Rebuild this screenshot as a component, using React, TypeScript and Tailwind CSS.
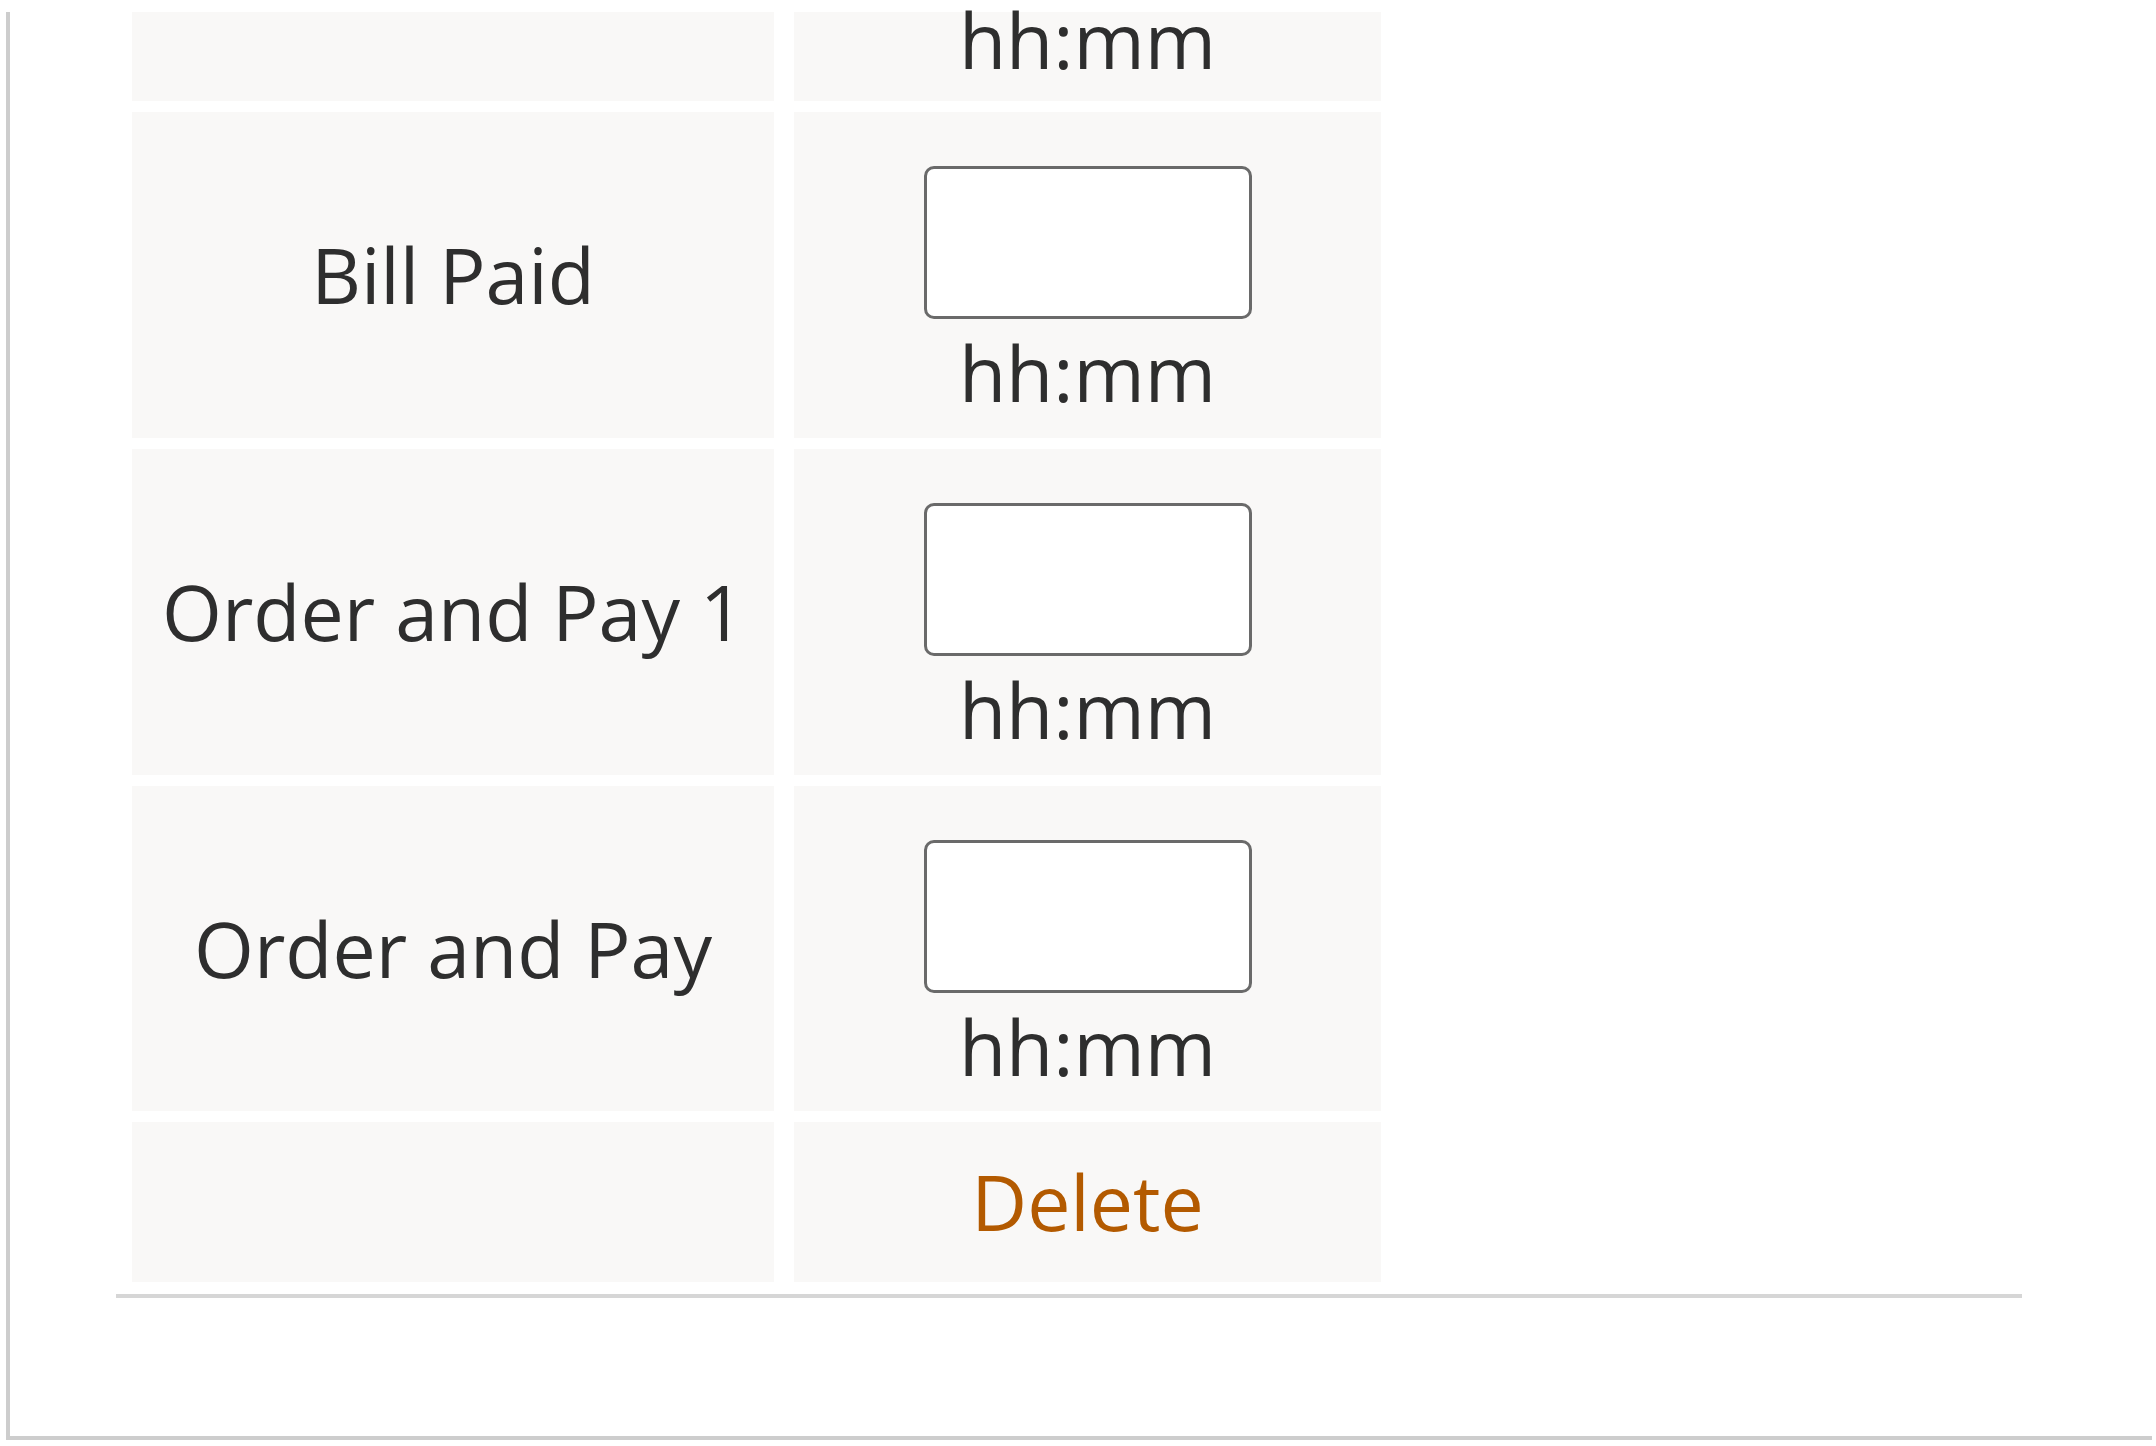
import React from 'react';

interface TimeRow {
  label: string;
}

const rows: TimeRow[] = [
  { label: 'Bill Paid' },
  { label: 'Order and Pay 1' },
  { label: 'Order and Pay' },
];

function TimeCell() {
  return (
    <div className="flex flex-col items-center bg-[#f9f8f7] pt-[54px]">
      <input
        type="text"
        aria-label="time"
        className="h-[153px] w-[328px] rounded-[10px] border-[3px] border-[#6a6a6a] bg-white outline-none"
      />
      <span className="mt-[8px] leading-[92px]">hh:mm</span>
    </div>
  );
}

export default function App() {
  return (
    <div
      className="h-[1446px] w-full overflow-hidden bg-white pl-[6px] pt-[12px] text-[77px] text-[#2e2e2e]"
      style={{ fontFamily: '"Open Sans", "Noto Sans", sans-serif' }}
    >
      <div className="h-[1428px] w-[2146px] border-b-4 border-l-4 border-[#cdcdcd]">
        <div className="ml-[122px] grid grid-cols-[642px_587px] grid-rows-[89px_326px_326px_325px_160px] gap-x-[20px] gap-y-[11px]">
          {/* tail of the row above, cut off by the scroll */}
          <div className="bg-[#f9f8f7]" />
          <div className="flex flex-col items-center justify-end bg-[#f9f8f7] pb-[23px]">
            <span className="leading-none">hh:mm</span>
          </div>

          {rows.map(row => (
            <React.Fragment key={row.label}>
              <div className="flex items-center justify-center bg-[#f9f8f7]">
                <span className="leading-[92px]">{row.label}</span>
              </div>
              <TimeCell />
            </React.Fragment>
          ))}

          <div className="bg-[#f9f8f7]" />
          <div className="flex items-center justify-center bg-[#f9f8f7]">
            <a href="#" className="leading-[92px] text-[#b35a00]">
              Delete
            </a>
          </div>
        </div>

        <div className="ml-[106px] mt-[12px] h-[4px] w-[1906px] bg-[#d6d6d6]" />
      </div>
    </div>
  );
}
